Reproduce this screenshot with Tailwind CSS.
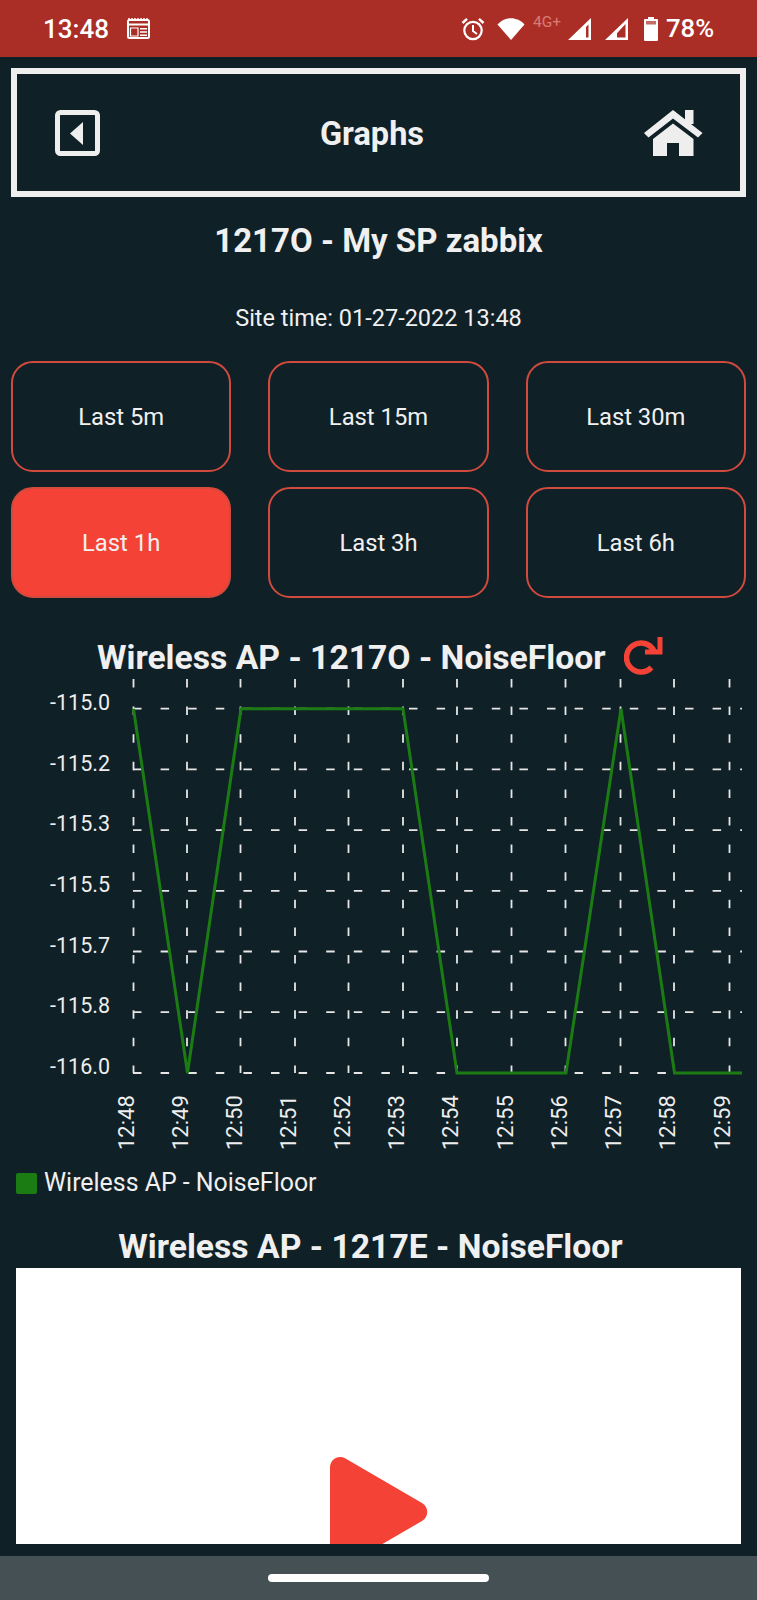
<!DOCTYPE html>
<html lang="en">
<head>
    <meta charset="UTF-8">
    <meta name="viewport" content="width=device-width, initial-scale=1.0">
    <title>Graphs</title>
    <script src="https://cdn.jsdelivr.net/npm/@tailwindcss/browser@4"></script>
</head>
<body class="bg-[#102027] font-['Roboto',sans-serif] text-[#f0f0f0] w-[757px] h-[1600px] overflow-hidden flex flex-col">
    <!-- Status bar -->
    <div class="h-[57px] bg-[#ab2e26] flex items-center text-white shrink-0">
        <span class="ml-[43px] text-[26px] font-medium leading-none">13:48</span>
        <svg class="ml-[18px]" width="23" height="21" viewBox="0 0 23 21" fill="none">
            <path d="M2 0v2M5 0v2M8 0v2M11 0v2M14 0v2M17 0v2M20 0v2" stroke="white" stroke-width="1.500"/>
            <rect x="1" y="2" width="21" height="18" rx="1.500" stroke="white" stroke-width="2"/>
            <path d="M1 6.500h21" stroke="white" stroke-width="2"/>
            <path d="M3.500 10h7.500v8H3.500z" stroke="white" stroke-width="1.200"/>
            <path d="M13 10h7v1.500h-7zM13 13.200h7v1.500h-7zM13 16.400h7v1.500h-7z" fill="white"/>
        </svg>
        <div class="ml-auto flex items-center h-full w-[300px]">
            <svg class="ml-[4px]" width="24" height="24" viewBox="0 0 24 24" fill="none">
                <circle cx="12" cy="13.500" r="8.700" stroke="white" stroke-width="2.200"/>
                <path d="M12 8v6l4 3" stroke="white" stroke-width="2"/>
                <path d="M1.500 6 6 1.800M22.500 6 18 1.800" stroke="white" stroke-width="2.400"/>
            </svg>
            <svg class="ml-[12px]" width="28" height="22" viewBox="0 0 28 22"><path d="M14 22 .5 6.500C4 2.500 9 .3 14 .3s10 2.200 13.500 6.200z" fill="white"/></svg>
            <span class="ml-[8px] mb-[11px] w-[32px] text-[#d97b73] text-[15.500px] leading-none">4G+</span>
            <svg class="ml-[3px]" width="23" height="22" viewBox="0 0 23 22"><path d="M23 0v22H0zM20.500 6.500l-2.500 2.500v10.500h2.500z" fill="white" fill-rule="evenodd"/></svg>
            <svg class="ml-[14px]" width="23" height="22" viewBox="0 0 23 22"><path d="M23 0v22H0zM20.500 6 8 19.500h12.500z" fill="white" fill-rule="evenodd"/><path d="M3 22 12 12.500V22z" fill="white"/></svg>
            <svg class="ml-[16px]" width="14" height="24" viewBox="0 0 14 24"><path d="M4 0h6v2h3a1 1 0 0 1 1 1v20a1 1 0 0 1-1 1H1a1 1 0 0 1-1-1V3a1 1 0 0 1 1-1h3z" fill="white"/><rect x="2" y="4" width="10" height="3.500" fill="#ab2e26" fill-opacity=".7"/></svg>
            <span class="ml-[8px] text-[25.700px] font-medium leading-none">78%</span>
        </div>
    </div>

    <!-- Header -->
    <div class="mt-[11px] mx-[11px] h-[129px] border-[6px] border-[#eeeeee] flex items-center justify-between shrink-0 pl-[38px] pr-[37px]">
        <svg width="45" height="46" viewBox="0 0 45 46" fill="none">
            <rect x="2.500" y="2.500" width="40" height="41" rx="3" stroke="#eeeeee" stroke-width="5"/>
            <path d="M28 12V35L15 23.500z" fill="#eeeeee"/>
        </svg>
        <span class="mt-[4px] text-[32.500px] font-bold leading-none">Graphs</span>
        <svg width="59" height="46" viewBox="0 0 59 46" fill="#eeeeee">
            <path d="M41 0h8.500v14H41z"/>
            <path d="M0 23 29 0 58.500 23l-4.500 4.500L29 8.500 4.500 27.500z"/>
            <path d="M9 29 29 13.500 49.500 29v17H35V33H23v13H9z"/>
        </svg>
    </div>

    <h1 class="mt-[26px] text-center text-[33px] font-bold leading-[36px]">1217O - My SP zabbix</h1>
    <p class="mt-[44px] text-center text-[23.500px] leading-[30px]">Site time: 01-27-2022 13:48</p>

    <!-- Range buttons -->
    <div class="mt-[28px] mx-[11px] grid grid-cols-3 gap-x-[37px] gap-y-[15px] text-[23.800px]">
        <button class="h-[111px] pt-[2px] rounded-[22px] border-[2.500px] border-[#d04a3e]">Last 5m</button>
        <button class="h-[111px] pt-[2px] rounded-[22px] border-[2.500px] border-[#d04a3e]">Last 15m</button>
        <button class="h-[111px] pt-[2px] rounded-[22px] border-[2.500px] border-[#d04a3e]">Last 30m</button>
        <button class="h-[111px] pt-[2px] rounded-[22px] border-[2.500px] border-[#d04a3e] bg-[#f44336]">Last 1h</button>
        <button class="h-[111px] pt-[2px] rounded-[22px] border-[2.500px] border-[#d04a3e]">Last 3h</button>
        <button class="h-[111px] pt-[2px] rounded-[22px] border-[2.500px] border-[#d04a3e]">Last 6h</button>
    </div>

    <!-- Chart 1 -->
    <div class="mt-[43px] h-[34px] flex items-center pl-[97px] gap-[18px]">
        <h2 class="text-[33.700px] font-bold leading-none whitespace-nowrap">Wireless AP - 1217O - NoiseFloor</h2>
        <svg class="-mt-[5px]" width="40" height="38" viewBox="0 0 40 38" fill="none">
            <path d="M27.500 30.500A14.500 14.500 0 1 1 30 14" stroke="#f44336" stroke-width="5.500"/>
            <path d="M21 15H36V0" stroke="#f44336" stroke-width="5"/>
        </svg>
    </div>
    <svg class="block shrink-0" width="757" height="480" viewBox="0 675 757 480">
        <g stroke="#e6e6e6" stroke-width="1.800" stroke-dasharray="8.500 19.100">
            <path d="M133.500 679V1073M187 679V1073M240.500 679V1073M295 679V1073M348.500 679V1073M403 679V1073M457 679V1073M511.500 679V1073M565.500 679V1073M620.500 679V1073M674 679V1073M729.500 679V1073"/>
            <path d="M133 708.700H742M133 769.400H742M133 830.100H742M133 890.800H742M133 951.500H742M133 1012.200H742M133 1073H742"/>
        </g>
        <polyline points="133.500,708.700 187.500,1073 241,708.700 403,708.700 457,1073 566,1073 621,708.700 674.500,1073 742,1073" fill="none" stroke="#1c7c14" stroke-width="3"/>
        <g class="fill-[#eeeeee] text-[21.500px]" text-anchor="end">
            <text x="110" y="710">-115.0</text>
            <text x="110" y="770.500">-115.2</text>
            <text x="110" y="831">-115.3</text>
            <text x="110" y="892">-115.5</text>
            <text x="110" y="952.500">-115.7</text>
            <text x="110" y="1013">-115.8</text>
            <text x="110" y="1074">-116.0</text>
        </g>
        <g class="fill-[#eeeeee] text-[22px]">
            <text transform="translate(133.500 1150) rotate(-90)">12:48</text>
            <text transform="translate(187.500 1150) rotate(-90)">12:49</text>
            <text transform="translate(241.500 1150) rotate(-90)">12:50</text>
            <text transform="translate(296 1150) rotate(-90)">12:51</text>
            <text transform="translate(350 1150) rotate(-90)">12:52</text>
            <text transform="translate(404 1150) rotate(-90)">12:53</text>
            <text transform="translate(458 1150) rotate(-90)">12:54</text>
            <text transform="translate(512.500 1150) rotate(-90)">12:55</text>
            <text transform="translate(566.500 1150) rotate(-90)">12:56</text>
            <text transform="translate(621 1150) rotate(-90)">12:57</text>
            <text transform="translate(675 1150) rotate(-90)">12:58</text>
            <text transform="translate(730 1150) rotate(-90)">12:59</text>
        </g>
    </svg>
    <div class="mt-[18px] ml-[16px] flex items-center gap-[7px] h-[21px]">
        <span class="w-[21px] h-[21px] rounded-[2px] bg-[#1c7c14]"></span>
        <span class="text-[24.900px] leading-none">Wireless AP - NoiseFloor</span>
    </div>

    <!-- Chart 2 -->
    <h2 class="mt-[35px] pr-[16px] text-center text-[33.700px] font-bold leading-[36px] whitespace-nowrap">Wireless AP - 1217E - NoiseFloor</h2>
    <div class="mt-[3px] mx-[16px] h-[276px] bg-white overflow-hidden shrink-0 relative">
        <svg class="absolute left-[314px] top-[189px]" width="98" height="110" viewBox="0 0 98 110">
            <path d="M0 11C0 2.500 8-2.500 15.500 1.500L92 46c7 4 7 14 0 18L15.500 108.500C8 112.500 0 107.500 0 99z" fill="#f44336"/>
        </svg>
    </div>
    <div class="mt-[12px] h-[44px] bg-[#455055] flex items-center justify-center shrink-0">
        <div class="w-[221px] h-[8px] rounded-full bg-white"></div>
    </div>
</body>
</html>
